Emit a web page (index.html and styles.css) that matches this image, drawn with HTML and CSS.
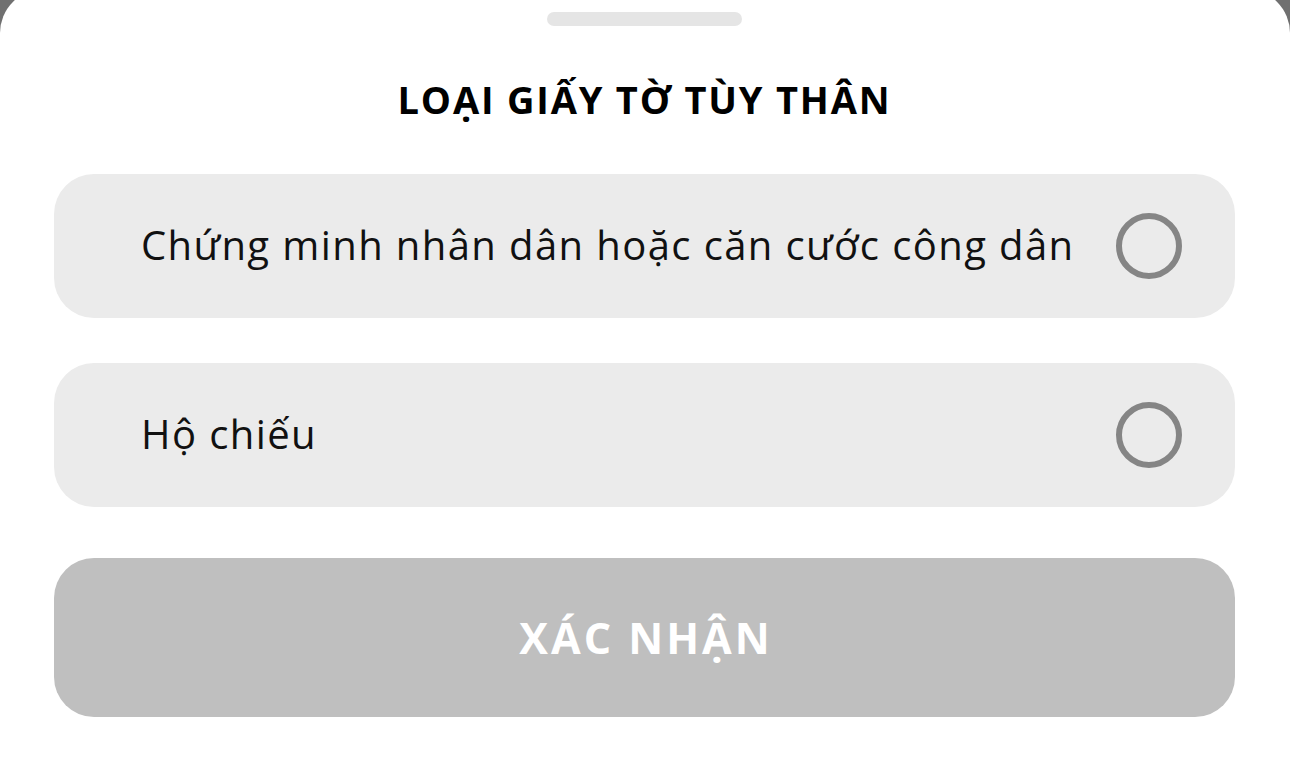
FILE: index.html
```html
<!DOCTYPE html>
<html lang="vi">
<head>
<meta charset="utf-8">
<title>Loại giấy tờ tùy thân</title>
<link rel="stylesheet" href="styles.css">
</head>
<body>
<div class="sheet">
  <div class="handle"></div>
  <h1 class="title">LOẠI GIẤY TỜ TÙY THÂN</h1>
  <div class="options">
    <div class="option">
      <span class="option-label">Chứng minh nhân dân hoặc căn cước công dân</span>
      <span class="radio"></span>
    </div>
    <div class="option">
      <span class="option-label">Hộ chiếu</span>
      <span class="radio"></span>
    </div>
  </div>
  <button class="confirm">XÁC NHẬN</button>
</div>
</body>
</html>
```
FILE: styles.css
```css
html, body {
  margin: 0;
  padding: 0;
}
body {
  background: #707070;
  width: 1290px;
  height: 760px;
  overflow: hidden;
  font-family: "Open Sans", "DejaVu Sans", sans-serif;
}
.sheet {
  margin-top: -11px;
  height: 771px;
  background: #ffffff;
  border-radius: 44px 44px 0 0;
  display: flex;
  flex-direction: column;
  align-items: center;
  padding: 0 55px 0 54px;
  box-sizing: border-box;
}
.handle {
  margin-top: 23px;
  width: 195px;
  height: 14px;
  border-radius: 7px;
  background: #e5e5e5;
  flex: none;
}
.title {
  margin: 49px 0 51px;
  font-size: 38px;
  line-height: 48px;
  font-weight: 700;
  letter-spacing: 1.8px;
  color: #000;
  text-align: center;
}
.options {
  width: 100%;
  display: flex;
  flex-direction: column;
  gap: 45px;
}
.option {
  height: 144px;
  border-radius: 40px;
  background: #ebebeb;
  display: flex;
  align-items: center;
  justify-content: space-between;
  padding: 0 53px 0 87px;
  box-sizing: border-box;
}
.option-label {
  font-size: 40px;
  color: #111;
  font-weight: 400;
  letter-spacing: 1.4px;
  margin-top: -3px;
}
.radio {
  width: 66px;
  height: 66px;
  border: 6px solid #858585;
  border-radius: 50%;
  box-sizing: border-box;
  flex: none;
}
.confirm {
  margin-top: 51px;
  width: 100%;
  height: 159px;
  border: none;
  border-radius: 40px;
  background: #bfbfbf;
  color: #fff;
  font-family: inherit;
  font-size: 43px;
  font-weight: 700;
  letter-spacing: 3px;
  text-indent: 3px;
  padding: 0;
}
```
